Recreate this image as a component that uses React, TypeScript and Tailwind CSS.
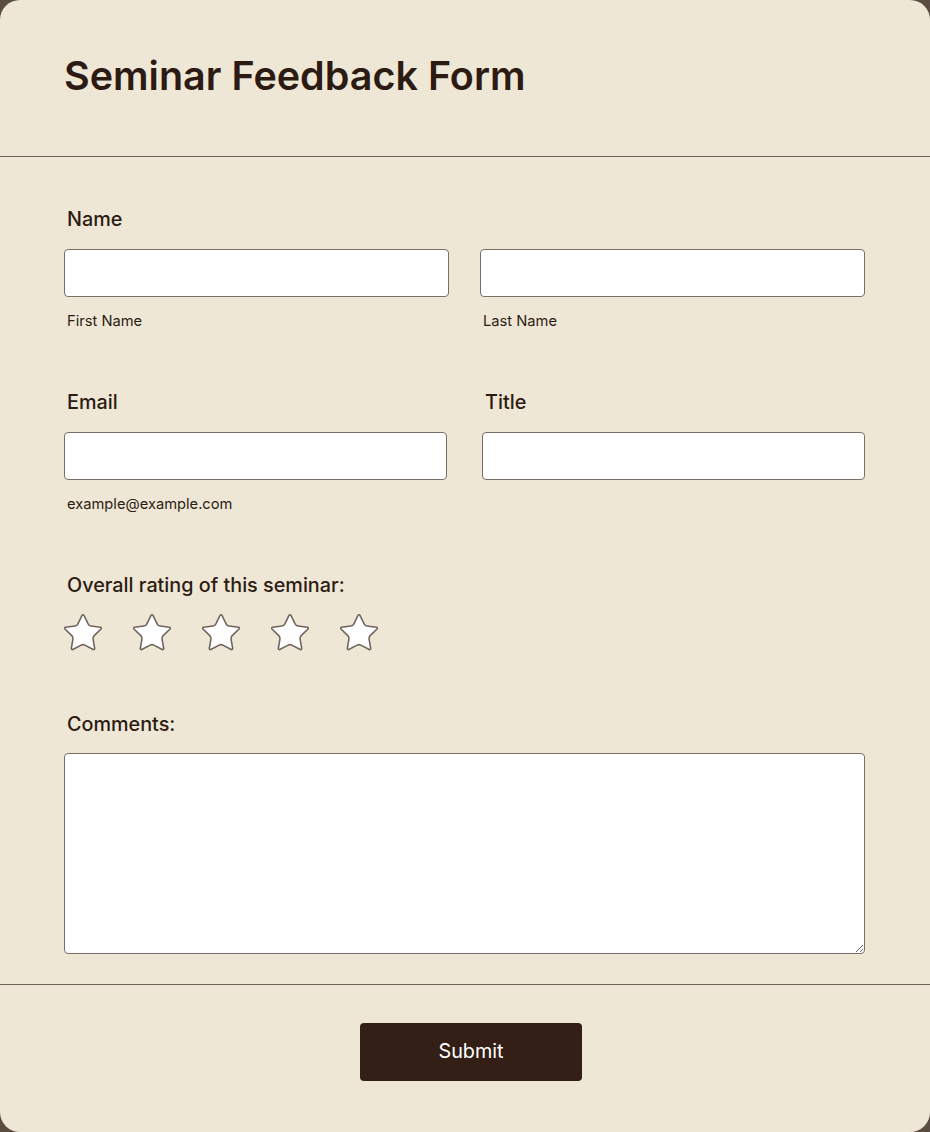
import React from 'react';

const font = { fontFamily: 'Inter, "Noto Sans", sans-serif' };

function StarIcon() {
  return (
    <svg width="44" height="44" viewBox="0 0 24 24" fill="#ffffff" stroke="#6f645d" strokeWidth="0.85" strokeLinejoin="round">
      <path d="M11.525 2.295a.53.53 0 0 1 .95 0l2.31 4.679a2.123 2.123 0 0 0 1.595 1.16l5.166.756a.53.53 0 0 1 .294.904l-3.736 3.638a2.123 2.123 0 0 0-.611 1.878l.882 5.14a.53.53 0 0 1-.771.56l-4.618-2.428a2.122 2.122 0 0 0-1.973 0L6.396 21.01a.53.53 0 0 1-.77-.56l.881-5.139a2.122 2.122 0 0 0-.611-1.879L2.16 9.795a.53.53 0 0 1 .294-.906l5.165-.755a2.122 2.122 0 0 0 1.597-1.16z" />
    </svg>
  );
}

function Label({ children }: { children: React.ReactNode }) {
  return <label className="block pl-[3px] text-[19.8px] leading-[24px] font-medium text-[#2c1b13]">{children}</label>;
}

function Sub({ children }: { children: React.ReactNode }) {
  return <p className="mt-[14px] pl-[3px] text-[14.7px] leading-[20px] text-[#2c1b13]">{children}</p>;
}

function Input() {
  return <input type="text" className="block h-[48px] w-full rounded-[4px] border border-[#7a6f68] bg-white px-3 outline-none" />;
}

export default function App() {
  return (
    <div className="h-[1132px] w-[930px] bg-[#5c4d43]" style={font}>
      <div className="flex h-full flex-col rounded-[20px] bg-[#efe7d6]">
        {/* Header */}
        <div className="h-[157px] border-b border-[#6f6259] pl-[64px] pt-[52px]">
          <h1 className="text-[39.5px] leading-[48px] font-semibold text-[#2c1b13]">Seminar Feedback Form</h1>
        </div>

        {/* Body */}
        <div className="border-b border-[#6f6259] pl-[64px] pr-[65px] pt-[50px] pb-[30px]">
          <Label>Name</Label>
          <div className="mt-[18px] grid grid-cols-2 gap-[31px]">
            <div>
              <Input />
              <Sub>First Name</Sub>
            </div>
            <div>
              <Input />
              <Sub>Last Name</Sub>
            </div>
          </div>

          <div className="mt-[59px] grid grid-cols-2 gap-[35px]">
            <div>
              <Label>Email</Label>
              <div className="mt-[18px]">
                <Input />
              </div>
              <Sub>example@example.com</Sub>
            </div>
            <div>
              <Label>Title</Label>
              <div className="mt-[18px]">
                <Input />
              </div>
            </div>
          </div>

          <div className="mt-[59px]">
            <Label>Overall rating of this seminar:</Label>
            <div className="-ml-[3px] mt-[14px] flex gap-[25px]">
              {[0, 1, 2, 3, 4].map((i) => (
                <StarIcon key={i} />
              ))}
            </div>
          </div>

          <div className="mt-[57px]">
            <Label>Comments:</Label>
            <textarea className="mt-[17px] block h-[201px] w-full rounded-[4px] border border-[#7a6f68] bg-white p-3 outline-none" />
          </div>
        </div>

        {/* Footer */}
        <div className="flex justify-center pl-[12px] pt-[38px]">
          <button className="h-[58px] w-[222px] rounded-[4px] bg-[#331f16] text-[19.8px] text-white">Submit</button>
        </div>
      </div>
    </div>
  );
}
